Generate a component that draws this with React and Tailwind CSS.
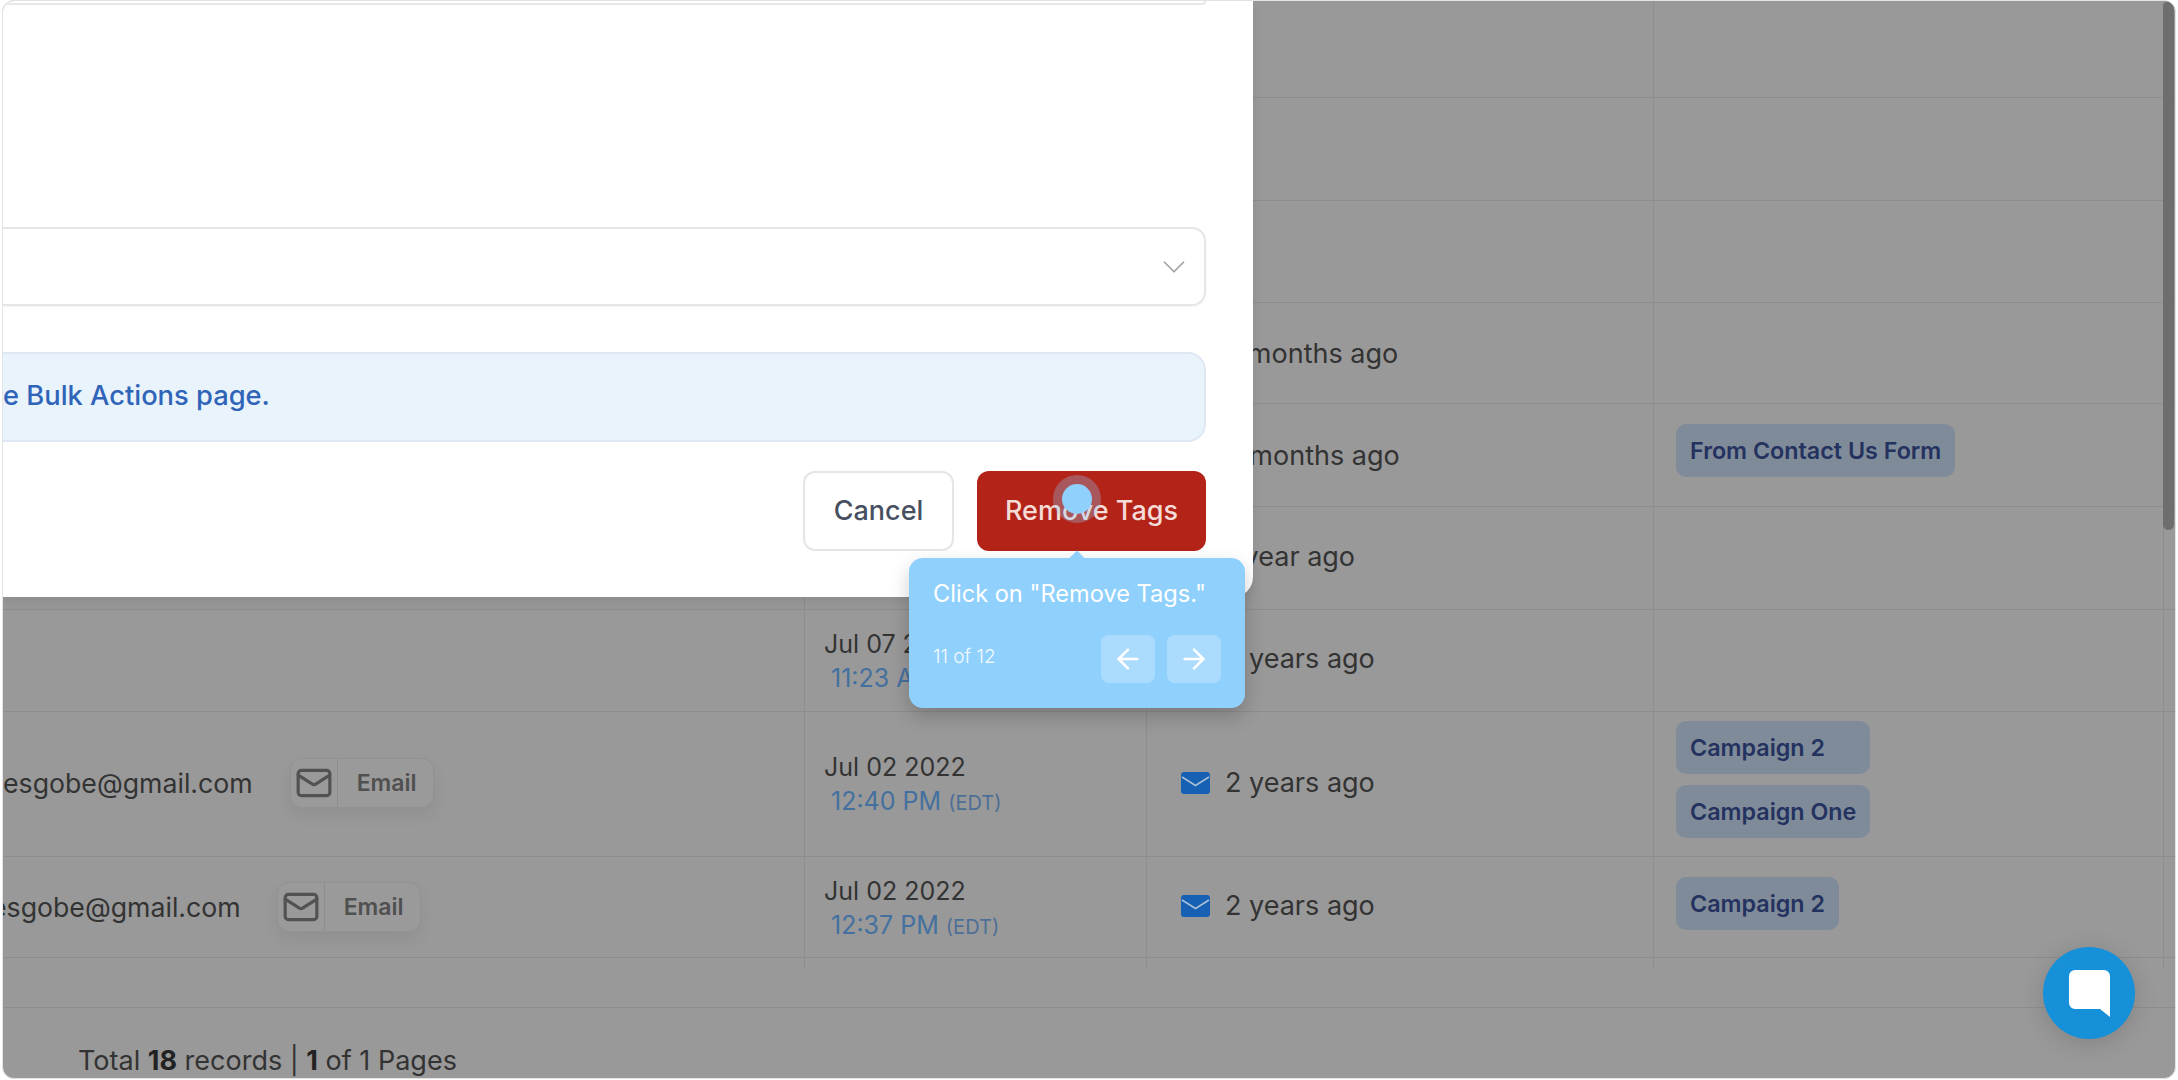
import React from "react";
import { ArrowLeft, ArrowRight, ChevronDown, Mail } from "lucide-react";

const rows = [
  { h: "h-[97px]" },
  { h: "h-[103px]" },
  { h: "h-[102px]" },
  { h: "h-[101px]", sent: "7 months ago", low: true },
  { h: "h-[103px]", sent: "9 months ago", low: true, tags: ["From Contact Us Form"] },
  { h: "h-[103px]", sent: "1 year ago" },
  { h: "h-[102px]", date: "Jul 07 2022", time: "11:23 AM", sent: "2 years ago" },
  {
    h: "h-[145px]",
    email: "esgobe@gmail.com",
    date: "Jul 02 2022",
    time: "12:40 PM",
    sent: "2 years ago",
    tags: ["Campaign 2", "Campaign One"],
    tight: true,
  },
  {
    h: "h-[101px]",
    email: "esgobe@gmail.com",
    shift: true,
    date: "Jul 02 2022",
    time: "12:37 PM",
    sent: "2 years ago",
    tags: ["Campaign 2"],
  },
];

const Envelope = () => (
  <svg width="29" height="22" viewBox="0 0 29 22" className="shrink-0">
    <rect width="29" height="22" rx="3" fill="#1761b5" />
    <path d="M1 5 L14.5 13.5 L28 5" fill="none" stroke="#a9bfd8" strokeWidth="1.5" />
  </svg>
);

const EmailButton = ({ shift }) => (
  <div
    className={`flex h-[50px] w-[144px] items-center rounded-[12px] border border-[#929292] bg-[#9a9a9a] shadow-[0_8px_16px_rgba(0,0,0,0.06)] ${
      shift ? "ml-[36px]" : "ml-[37px]"
    }`}
  >
    <div className="flex h-full w-[47px] items-center justify-center border-r border-[#8d8d8d]">
      <Mail size={38} strokeWidth={2} className="text-[#525252]" />
    </div>
    <span className="pl-[19px] text-[23px] font-semibold text-[#505050]">Email</span>
  </div>
);

const Row = ({ row }) => (
  <div className={`grid grid-cols-[802px_342px_507px_510px] border-b border-[#8d8d8d] ${row.h}`}>
    <div className={`flex items-center overflow-hidden border-r border-[#8d8d8d] ${row.shift ? "" : "pb-[2px]"}`}>
      {row.email && (
        <>
          <span className={`whitespace-nowrap text-[26.7px] text-[#333333] ${row.shift ? "ml-[-12px]" : ""}`}>
            {row.email}
          </span>
          <EmailButton shift={row.shift} />
        </>
      )}
    </div>
    <div className={`flex flex-col justify-center border-r border-[#8d8d8d] pl-[19px] ${row.shift ? "pt-[3px]" : "pt-[2px]"}`}>
      {row.date && (
        <>
          <div className="text-[25px] leading-[34px] text-[#333333]">{row.date}</div>
          <div className="pl-[7px] text-[25px] leading-[34px] text-[#44709f]">
            {row.time} <span className="text-[20px] text-[#4d6f96]">(EDT)</span>
          </div>
        </>
      )}
    </div>
    <div className={`flex items-center gap-[15px] border-r border-[#8d8d8d] pl-[34px] ${row.low ? "pt-[2px]" : "pb-[2px]"}`}>
      {row.sent && (
        <>
          <Envelope />
          <span className="text-[27px] text-[#333333]">{row.sent}</span>
        </>
      )}
    </div>
    <div className={`border-r border-[#8d8d8d] pl-[22px] ${row.tight ? "pt-[9px]" : "pt-[20px]"}`}>
      {row.tags && (
        <div className="inline-flex flex-col gap-[11px]">
          {row.tags.map((t) => (
            <span
              key={t}
              className="flex h-[53px] items-center rounded-[10px] bg-[#808b9a] px-[14px] pt-[2px] text-[23.3px] font-semibold whitespace-nowrap text-[#24325f]"
            >
              {t}
            </span>
          ))}
        </div>
      )}
    </div>
  </div>
);

export default function App() {
  return (
    <div className="h-[1080px] w-[2178px] bg-white font-['Inter',sans-serif]">
      <div className="relative ml-[2px] h-[1079px] w-[2174px] overflow-hidden rounded-[12px] border border-[#e3e3e3] bg-[#999999]">
        {/* table behind the overlay */}
        <div>
          {rows.map((row, i) => (
            <Row key={i} row={row} />
          ))}
          <div className="grid h-[10px] grid-cols-[802px_342px_507px_510px]">
            <div className="border-r border-[#8d8d8d]" />
            <div className="border-r border-[#8d8d8d]" />
            <div className="border-r border-[#8d8d8d]" />
            <div className="border-r border-[#8d8d8d]" />
          </div>
        </div>

        <div className="mt-[39px] h-[71px] border-t border-[#8d8d8d] pt-[35px] pl-[75px] text-[27px] leading-[36px] text-[#333333]">
          Total <b className="font-bold text-[#222222]">18</b> records | <b className="font-bold text-[#222222]">1</b> of 1 Pages
        </div>

        {/* scrollbar */}
        <div className="absolute top-0 right-[1px] h-[529px] w-[11px] rounded-full bg-[#6e6e6e]" />

        {/* modal */}
        <div className="absolute top-0 left-0 flex h-[596px] w-[1250px] flex-col items-end rounded-br-[20px] bg-white pr-[47px] shadow-[0_6px_10px_rgba(0,0,0,0.08)]">
          <div className="h-[4px] w-full rounded-br-[14px] border-r-2 border-b-2 border-[#e8e8ec]" />
          <div className="mt-[222px] flex h-[79px] w-full items-center justify-end rounded-r-[14px] border-y-2 border-r-2 border-[#e5e5ea] pr-[11px] shadow-[0_1px_2px_rgba(0,0,0,0.05)]">
            <ChevronDown size={38} strokeWidth={1.1} className="text-[#a3a3a3]" />
          </div>
          <div className="mt-[46px] flex h-[90px] w-full items-center rounded-r-[18px] border-y-2 border-r-2 border-[#dfe8f2] bg-[#e9f3fc] pb-[2px] text-[27.3px] font-medium text-[#2f64b8]">
            e Bulk Actions page.
          </div>
          <div className="mt-[29px] flex gap-[23px]">
            <button className="h-[80px] w-[151px] rounded-[12px] border-2 border-[#e5e5e8] bg-white text-[27px] font-medium text-[#475060]">
              Cancel
            </button>
            <button className="h-[80px] w-[229px] rounded-[12px] bg-[#b32317] text-[27px] font-medium text-[#f5dcd8]">
              Remove Tags
            </button>
          </div>
        </div>

        {/* chat launcher */}
        <div className="absolute top-[946px] left-[2040px] flex size-[92px] items-center justify-center rounded-full bg-[#1690d8] shadow-[0_4px_24px_rgba(0,0,0,0.15)]">
          <svg width="41" height="47" viewBox="0 0 41 47">
            <path d="M6 0H35a6 6 0 0 1 6 6V47L31 39H6a6 6 0 0 1-6-6V6a6 6 0 0 1 6-6z" fill="#ffffff" />
          </svg>
        </div>

        {/* guide hotspot */}
        <div className="absolute top-[474px] left-[1050px] flex size-[48px] items-center justify-center rounded-full bg-[#8fd0fc]/30">
          <div className="size-[30px] rounded-full bg-[#8fd0fc]" />
        </div>

        {/* guide tooltip */}
        <div className="absolute top-[557px] left-[906px] h-[150px] w-[336px] rounded-[14px] bg-[#8fd0fc] pt-[20px] pl-[24px] text-white shadow-[0_8px_20px_rgba(0,0,0,0.2)]">
          <div className="absolute top-[-5px] left-[162px] size-[12px] rotate-45 bg-[#8fd0fc]" />
          <div className="text-[23.6px] leading-[32px]">Click on "Remove Tags."</div>
          <div className="mt-[25px] flex items-center">
            <span className="pb-[4px] text-[19px] font-light text-white/90">11 of 12</span>
            <div className="ml-auto flex gap-[12px] pr-[24px]">
              <button className="flex h-[48px] w-[54px] items-center justify-center rounded-[8px] bg-white/25">
                <ArrowLeft size={32} strokeWidth={1.9} />
              </button>
              <button className="flex h-[48px] w-[54px] items-center justify-center rounded-[8px] bg-white/25">
                <ArrowRight size={32} strokeWidth={1.9} />
              </button>
            </div>
          </div>
        </div>
      </div>
    </div>
  );
}
